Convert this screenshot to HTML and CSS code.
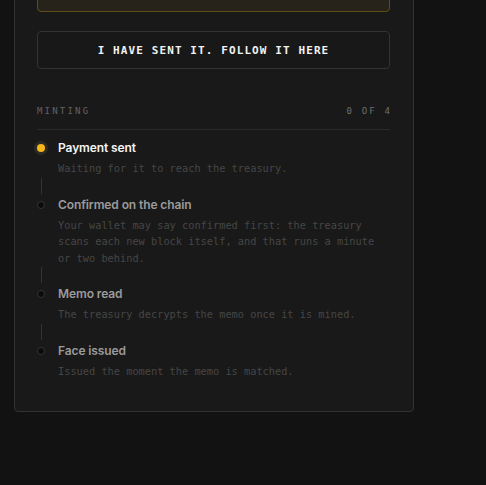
FILE: index.html
```html
<!DOCTYPE html>
<html>
<head>
<meta charset="utf-8">
<link rel="stylesheet" href="styles.css">
</head>
<body>
<div class="page">
  <div class="card">
    <div class="notice"></div>
    <button class="follow">I HAVE SENT IT. FOLLOW IT HERE</button>
    <div class="section-head">
      <span>MINTING</span>
      <span class="count">0 OF 4</span>
    </div>
    <ol class="steps">
      <li class="step active">
        <div class="rail"><span class="dot"></span><span class="line"></span></div>
        <div class="body">
          <div class="title">Payment sent</div>
          <div class="desc">Waiting for it to reach the treasury.</div>
        </div>
      </li>
      <li class="step">
        <div class="rail"><span class="dot"></span><span class="line"></span></div>
        <div class="body">
          <div class="title">Confirmed on the chain</div>
          <div class="desc">Your wallet may say confirmed first: the treasury scans each new block itself, and that runs a minute or two behind.</div>
        </div>
      </li>
      <li class="step">
        <div class="rail"><span class="dot"></span><span class="line"></span></div>
        <div class="body">
          <div class="title">Memo read</div>
          <div class="desc">The treasury decrypts the memo once it is mined.</div>
        </div>
      </li>
      <li class="step last">
        <div class="rail"><span class="dot"></span></div>
        <div class="body">
          <div class="title">Face issued</div>
          <div class="desc">Issued the moment the memo is matched.</div>
        </div>
      </li>
    </ol>
  </div>
</div>
</body>
</html>
```
FILE: styles.css
```css
html, body {
  margin: 0;
  padding: 0;
  background: #121212;
}
.page {
  padding-left: 14px;
  margin-top: -40px;
}
.card {
  width: 353px;
  background: #191919;
  border: 1px solid #323232;
  border-radius: 4px;
  padding: 22px 23px 16px 22px;
}
.notice {
  height: 27px;
  background: #28231a;
  border: 1px solid #5f4d15;
  border-radius: 4px;
}
.follow {
  display: block;
  width: 100%;
  height: 38px;
  margin-top: 19px;
  background: #181818;
  border: 1px solid #333;
  border-radius: 4px;
  color: #f2f2f2;
  font-family: "DejaVu Sans Mono", monospace;
  font-weight: bold;
  font-size: 11px;
  letter-spacing: 1.1px;
  padding: 0;
  cursor: pointer;
}
.section-head {
  display: flex;
  justify-content: space-between;
  margin-top: 36px;
  padding-bottom: 12px;
  border-bottom: 1px solid #2a2a2a;
  font-family: "DejaVu Sans Mono", monospace;
  font-size: 9px;
  line-height: 12px;
  letter-spacing: 2.2px;
  color: #626262;
}
.section-head .count {
  color: #6e6e6e;
  margin-right: -2.2px;
}
.steps {
  list-style: none;
  margin: 9px 0 0;
  padding: 0;
}
.step {
  display: flex;
  gap: 13px;
  padding-bottom: 19px;
}
.step.last {
  padding-bottom: 16px;
}
.rail {
  width: 8px;
  display: flex;
  flex-direction: column;
  align-items: center;
}
.dot {
  width: 8px;
  height: 8px;
  box-sizing: border-box;
  border-radius: 50%;
  background: #0b0b0b;
  border: 1px solid #343434;
  margin-top: 5px;
}
.active .dot {
  background: #f4b619;
  border: none;
  box-shadow: 0 0 0 3px #2c2a22;
}
.line {
  width: 1px;
  height: 16px;
  background: #333;
  margin-top: auto;
  margin-bottom: -17px;
}
.body {
  flex: 1;
}
.title {
  font-family: Inter, "Noto Sans", sans-serif;
  font-weight: 600;
  font-size: 12px;
  line-height: 18px;
  color: #9b9b9b;
  letter-spacing: -0.1px;
}
.active .title {
  color: #f4f4f4;
}
.desc {
  margin-top: 3px;
  font-family: "DejaVu Sans Mono", monospace;
  font-size: 10.3px;
  line-height: 16.5px;
  color: #464646;
}
```
